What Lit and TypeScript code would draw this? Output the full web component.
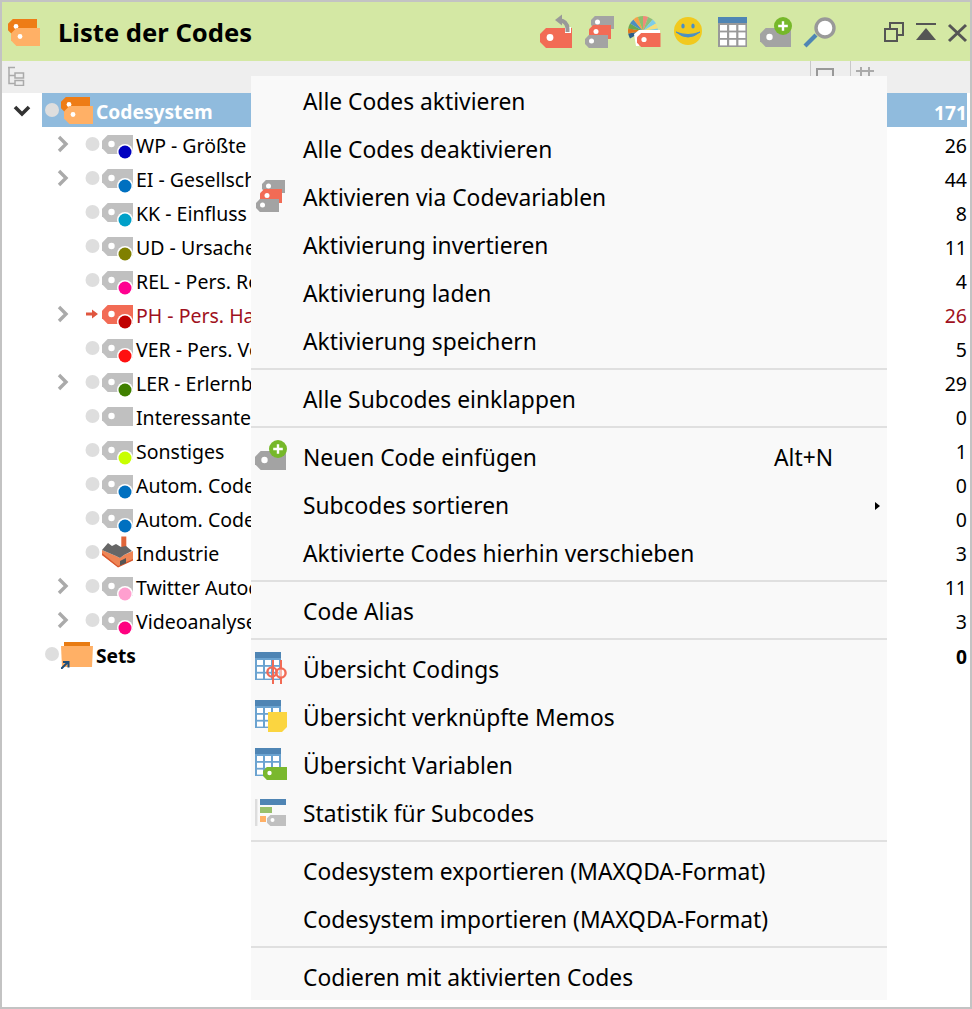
import { LitElement, html, css, svg } from "lit";
import { customElement } from "lit/decorators.js";

const GRAY = "#a3a3a3";
const RED = "#f26b55";
const BLUE = "#4f85b4";
const CELL = "#6ba3d0";

const tagShape = (x: number, y: number, w: number, h: number, fill: string, hole = 3.2) => {
  const c = h * 0.3;
  return svg`<path d="M${x + c} ${y}H${x + w}V${y + h}H${x + c}L${x} ${y + h - c}V${y + c}Z" fill=${fill}/>
    <circle cx=${x + h * 0.5} cy=${y + h * 0.5 - 0.5} r=${hole} fill="#fff"/>`;
};

const wedge = (cx: number, cy: number, r: number, a0: number, a1: number, fill: string) => {
  const p = (a: number) => `${cx + r * Math.cos((a * Math.PI) / 180)} ${cy + r * Math.sin((a * Math.PI) / 180)}`;
  return svg`<path d="M${cx} ${cy}L${p(a0)}A${r} ${r} 0 0 1 ${p(a1)}Z" fill=${fill}/>`;
};

const PIE = ["#2d5f8a", "#e0761c", "#6aa84f", "#4d8ec0", "#f5a24b", "#8fc06a", "#f08a7a", "#8fbf7a", "#7ccdea", "#f2de7b", "#7ccdea"];

const stackIcon = svg`${tagShape(13, 6, 23, 13, GRAY, 2.5)}${tagShape(11, 15, 22, 14, RED, 2.5)}${tagShape(7, 25, 23, 13, GRAY, 2.5)}`;
const plusIcon = svg`${tagShape(6, 18, 31, 19, GRAY, 3.2)}
  <circle cx="29" cy="16" r="9" fill="#76b82a"/>
  <path d="M29 11.2V20.8M24.2 16H33.8" stroke="#fff" stroke-width="2.4"/>`;

const tableBase = svg`<rect x="3" y="0" width="26" height="28" fill=${CELL}/>
  <rect x="3" y="0" width="26" height="6" fill=${BLUE}/>
  ${[0, 1, 2].flatMap((r) => [0, 1, 2].map((c) => svg`<rect x=${5 + c * 8} y=${8 + r * 6.8} width="6" height="5" fill="#fff"/>`))}`;

const tbIcons = [
  svg`${tagShape(6, 18, 32, 20, RED, 3.4)}
    <rect x="31" y="17" width="6" height="6" fill="#fff"/>
    <path d="M33.5 22V19Q33.5 11 25 10" fill="none" stroke="#999" stroke-width="4"/>
    <path d="M21 10L28 4.5V15.5Z" fill="#999"/>`,
  stackIcon,
  svg`${PIE.map((c, i) => wedge(21, 21, 15, 150 + i * 20, 150 + (i + 1) * 20 + 0.5, c))}
    <path d="M12 24L17 20H38V23H20L17 36H14Z" fill="#fff"/>
    ${tagShape(15, 23, 23.5, 14, RED, 2.6)}`,
  svg`<circle cx="22" cy="21" r="14" fill="#f1c91e"/>
    <ellipse cx="17" cy="16" rx="1.7" ry="2.6" fill="#4a8fc5"/>
    <ellipse cx="27" cy="16" rx="1.7" ry="2.6" fill="#4a8fc5"/>
    <path d="M10 22Q22 32 34 22Q22 27 10 22Z" fill="#4a8fc5" stroke="#4a8fc5"/>`,
  svg`<rect x="8" y="7" width="29" height="30" fill="#999"/>
    <rect x="8" y="7" width="29" height="6" fill=${BLUE}/>
    ${[0, 1, 2].flatMap((r) => [0, 1, 2].map((c) => svg`<rect x=${10 + c * 9.2} y=${15 + r * 7.4} width="7" height="5.6" fill="#fff"/>`))}`,
  plusIcon,
  svg`<path d="M7 36L18 25" stroke=${BLUE} stroke-width="4.2"/>
    <circle cx="27" cy="18" r="9" fill="#fff" stroke="#999" stroke-width="3.4"/>`,
];

const menuIcons: Record<string, unknown> = {
  stack: html`<svg class="mi" viewBox="3 6 36 36">${stackIcon}</svg>`,
  plus: html`<svg class="mi" viewBox="3 7 36 36">${plusIcon}</svg>`,
  coding: html`<svg class="mi" viewBox="0 0 36 36">${tableBase}
      <path d="M21 8V32M29 8V32" stroke=${RED} stroke-width="2"/>
      <circle cx="20" cy="20" r="4.6" fill="none" stroke=${RED} stroke-width="2.4"/>
      <circle cx="29" cy="21" r="4.6" fill="#fff" fill-opacity=".5" stroke=${RED} stroke-width="2.4"/></svg>`,
  memo: html`<svg class="mi" viewBox="0 0 36 36">${tableBase}
      <path d="M16 12H35V27L30 32H16Z" fill="#fbd540"/></svg>`,
  vars: html`<svg class="mi" viewBox="0 0 36 36">${tableBase}
      ${tagShape(11, 19, 24, 13, "#7ab82e", 2.2)}</svg>`,
  stats: html`<svg class="mi" viewBox="0 1 36 36">
      <rect x="3" y="4" width="2.4" height="27" fill="#ddd"/>
      <rect x="8" y="4" width="26" height="6" fill=${BLUE}/>
      <rect x="8" y="12" width="12" height="6" fill="#98c06b"/>
      <rect x="8" y="21" width="6" height="6" fill="#ffb066"/>
      ${tagShape(15, 20, 19, 11, "#c0c0c0", 2)}</svg>`,
};

const codeIcon = html`<svg class="code" viewBox="0 0 32 28">
  ${tagShape(0, 0, 29, 16, "#ee7c16", 2.4)}
  ${tagShape(3, 9, 29, 18, "#ffb066", 2.4)}
</svg>`;

type Row = { label: string; n: number; dot?: string; chev?: boolean; kind?: string };
const rows: Row[] = [
  { label: "WP - Größte", n: 26, dot: "#0000c0", chev: true },
  { label: "EI - Gesellschaft", n: 44, dot: "#0070c0", chev: true },
  { label: "KK - Einfluss", n: 8, dot: "#00a0c8" },
  { label: "UD - Ursachen", n: 11, dot: "#808000" },
  { label: "REL - Pers. Rel", n: 4, dot: "#ff0090" },
  { label: "PH - Pers. Halt", n: 26, dot: "#c00000", chev: true, kind: "active" },
  { label: "VER - Pers. Ver", n: 5, dot: "#ff1010" },
  { label: "LER - Erlernbar", n: 29, dot: "#408000", chev: true },
  { label: "Interessante", n: 0 },
  { label: "Sonstiges", n: 1, dot: "#c8ff00" },
  { label: "Autom. Code", n: 0, dot: "#0070c0" },
  { label: "Autom. Code", n: 0, dot: "#0070c0" },
  { label: "Industrie", n: 3, kind: "factory" },
  { label: "Twitter Autocode", n: 11, dot: "#ff9fcf", chev: true },
  { label: "Videoanalyse", n: 3, dot: "#ff0080", chev: true },
];

type Item = { t?: string; icon?: string; key?: string; sub?: boolean };
const menu: Item[] = [
  { t: "Alle Codes aktivieren" },
  { t: "Alle Codes deaktivieren" },
  { t: "Aktivieren via Codevariablen", icon: "stack" },
  { t: "Aktivierung invertieren" },
  { t: "Aktivierung laden" },
  { t: "Aktivierung speichern" },
  {},
  { t: "Alle Subcodes einklappen" },
  {},
  { t: "Neuen Code einfügen", icon: "plus", key: "Alt+N" },
  { t: "Subcodes sortieren", sub: true },
  { t: "Aktivierte Codes hierhin verschieben" },
  {},
  { t: "Code Alias" },
  {},
  { t: "Übersicht Codings", icon: "coding" },
  { t: "Übersicht verknüpfte Memos", icon: "memo" },
  { t: "Übersicht Variablen", icon: "vars" },
  { t: "Statistik für Subcodes", icon: "stats" },
  {},
  { t: "Codesystem exportieren (MAXQDA-Format)" },
  { t: "Codesystem importieren (MAXQDA-Format)" },
  {},
  { t: "Codieren mit aktivierten Codes" },
];

@customElement("app-root")
export class AppRoot extends LitElement {
  static styles = css`
    :host {
      display: block;
      width: 972px;
      height: 1009px;
      position: relative;
      font-family: "Noto Sans", "Open Sans", sans-serif;
      color: #000;
      overflow: hidden;
    }
    .frame {
      box-sizing: border-box;
      height: 1009px;
      border: 2px solid #c3c3c3;
      background: #fff;
      display: flex;
      flex-direction: column;
    }
    .head {
      height: 59px;
      flex: none;
      background: #d4e8a4;
      display: flex;
      align-items: flex-start;
    }
    .logo { width: 32px; height: 28px; margin: 17px 0 0 6px; flex: none; }
    .title {
      font-weight: 700;
      font-size: 25.6px;
      line-height: 61px;
      margin-left: 18px;
      flex: 1;
    }
    .tools { display: flex; margin: 8px 40px 0 0; }
    .tools svg { width: 44px; height: 44px; display: block; }
    .win { display: flex; gap: 8px; margin-top: 18px; }
    .win svg { width: 24px; height: 24px; display: block; }
    .bar {
      height: 32px;
      flex: none;
      background: #eeeeee;
      display: flex;
      padding-left: 3px;
    }
    .bar .tree { width: 20px; height: 20px; margin-top: 5px; }
    .colh {
      border-left: 1px solid #c8c8c8;
      width: 39px;
      flex: none;
    }
    .colh svg { width: 20px; height: 20px; margin: 6px 0 0 4px; display: block; }
    .colh.first { margin-left: auto; }
    .colh.last { width: 119px; }
    .list { flex: 1; }
    .row {
      height: 34px;
      display: flex;
      align-items: stretch;
      padding-right: 3px;
      font-size: 19.5px;
    }
    .sel {
      flex: 1;
      display: flex;
      align-items: center;
      font-weight: 700;
      min-width: 0;
      font-size: 19.2px;
    }
    .sel.on { background: #90bbdd; color: #fff; }
    .root-chev { width: 40px; flex: none; }
    .root-chev svg { width: 40px; height: 34px; display: block; }
    .cdot { width: 14px; height: 14px; border-radius: 50%; background: #dedede; margin: 0 2px 0 3px; flex: none; }
    .code { width: 32px; height: 28px; flex: none; position: relative; top: 1px; }
    .sel .lbl { margin-left: 3px; padding-top: 4px; line-height: 34px; flex: 1; }
    .sel .n { padding-top: 4px; }
    .n { line-height: 34px; padding-top: 2px; text-align: right; flex: none; height: 32px; }
    .chev { width: 18px; flex: none; margin: 0 13px 0 52px; }
    .chev svg { width: 18px; height: 34px; display: block; }
    .dot { width: 15px; flex: none; }
    .dot svg { width: 15px; height: 34px; display: block; }
    .ic { width: 34px; height: 34px; flex: none; display: block; }
    .lbl2 { margin-left: 2px; flex: 1; line-height: 34px; padding-top: 2px; height: 32px; white-space: nowrap; }
    .active { color: #a01020; }
    .menu {
      position: absolute;
      left: 251px;
      top: 76px;
      width: 636px;
      height: 924px;
      background: #f9f9f9;
      overflow: hidden;
      padding-top: 2px;
      box-sizing: border-box;
      font-size: 22.8px;
    }
    .it { height: 48px; display: flex; align-items: center; position: relative; }
    .it .iconcell { width: 52px; height: 48px; flex: none; display: flex; align-items: center; }
    .mi { width: 36px; height: 36px; display: block; margin-left: 1px; }
    .it .txt { flex: 1; white-space: nowrap; padding-bottom: 2px; }
    .key { margin-right: 54px; padding-bottom: 2px; }
    .arrow {
      position: absolute;
      left: 624px;
      top: 20px;
      width: 0;
      height: 0;
      border-left: 5px solid #000;
      border-top: 4px solid transparent;
      border-bottom: 4px solid transparent;
    }
    .sep { height: 10px; box-sizing: border-box; padding-top: 2px; }
    .sep i { display: block; height: 2px; background: #e0e0e0; }
  `;

  private row(r: Row) {
    const active = r.kind === "active";
    return html`<div class="row ${active ? "active" : ""}">
      <div class="chev">
        ${r.chev
          ? html`<svg viewBox="0 0 18 34"><path d="M5 10L12 17L5 24" fill="none" stroke="#aaa" stroke-width="3.4"/></svg>`
          : ""}
      </div>
      <div class="dot">
        <svg viewBox="0 0 15 34">
          ${active
            ? svg`<path d="M1 15.5H7V12.5L13 17L7 21.5V18.5H1Z" fill="#e0563f"/>`
            : svg`<circle cx="7.5" cy="17" r="7" fill="#dedede"/>`}
        </svg>
      </div>
      ${r.kind === "factory"
        ? html`<svg class="ic" viewBox="0 0 34 34">
            <rect x="21.3" y="1.5" width="5" height="13" fill="#e0653a"/>
            <path d="M2 15V20L18 32L33 25V16L24 20L20 23L16 21Z" fill="#ee8555"/>
            <path d="M2 18L18 31L33 24V25.5L18 32.5L2 20Z" fill="#d8562c"/>
            <path d="M2 15L8 8L12 11L16 9L21 12L26 11L32 16L24 20L20 23L16 21Z" fill="#666"/>
            <path d="M20 26L26 23V28L20 30.5Z" fill="#555"/>
          </svg>`
        : html`<svg class="ic" viewBox="0 0 34 34">
            ${tagShape(2, 8, 31, 19, active ? RED : "#c0c0c0", 3.2)}
            ${r.dot
              ? svg`<circle cx="25" cy="25" r="8" fill="#fff"/><circle cx="25" cy="25" r="6.5" fill=${r.dot}/>`
              : ""}
          </svg>`}
      <div class="lbl2">${r.label}</div>
      <div class="n">${r.n}</div>
    </div>`;
  }

  render() {
    return html`<div class="frame">
        <div class="head">
          <svg class="logo" viewBox="0 0 32 28">
            ${tagShape(0, 0, 29, 16, "#ee7c16", 2.4)}${tagShape(3, 9, 29, 18, "#ffb066", 2.4)}
          </svg>
          <div class="title">Liste der Codes</div>
          <div class="tools">
            ${tbIcons.map((g) => html`<svg viewBox="0 0 44 44">${g}</svg>`)}
          </div>
          <div class="win">
            <svg viewBox="0 0 24 24">
              <path d="M8 10V3H21V15H15" fill="none" stroke="#555" stroke-width="2"/>
              <rect x="3" y="9" width="12" height="12" fill="none" stroke="#555" stroke-width="2"/>
            </svg>
            <svg viewBox="0 0 24 24">
              <rect x="2" y="3" width="20" height="2" fill="#555"/>
              <path d="M12 8L22 20H2Z" fill="#555"/>
            </svg>
            <svg viewBox="0 0 24 24">
              <path d="M3 5L20 21M20 5L3 21" stroke="#555" stroke-width="3"/>
            </svg>
          </div>
        </div>
        <div class="bar">
          <svg class="tree" viewBox="0 0 20 20">
            <path d="M3 1.5H10M4 1.5V17.5H10M4 9.5H10" fill="none" stroke="#aaa" stroke-width="1.5"/>
            <rect x="10" y="7" width="8.5" height="5" fill="none" stroke="#aaa" stroke-width="1.5"/>
            <rect x="10" y="14.5" width="8.5" height="5" fill="none" stroke="#aaa" stroke-width="1.5"/>
          </svg>
          <div class="colh first">
            <svg viewBox="0 0 20 20"><rect x="2" y="2" width="16" height="16" fill="none" stroke="#999" stroke-width="2"/></svg>
          </div>
          <div class="colh last">
            <svg viewBox="0 0 20 20"><path d="M6 0V20M14 0V20M1 4H19M1 12H19" stroke="#aaa" stroke-width="2" fill="none"/></svg>
          </div>
        </div>
        <div class="list">
          <div class="row">
            <div class="root-chev">
              <svg viewBox="0 0 40 34"><path d="M13 14L20 21L27 14" fill="none" stroke="#333" stroke-width="3.6"/></svg>
            </div>
            <div class="sel on">
              <div class="cdot"></div>
              ${codeIcon}
              <div class="lbl">Codesystem</div>
              <div class="n">171</div>
            </div>
          </div>
          ${rows.map((r) => this.row(r))}
          <div class="row">
            <div class="root-chev"></div>
            <div class="sel">
              <div class="cdot"></div>
              <svg class="code" viewBox="0 -1 32 28">
                <rect x="3" y="0" width="26" height="6" fill="#e87b12"/>
                <path d="M0 4H32L31 25H1Z" fill="#ffb066"/>
                <path d="M0 27L7 20M2 20H7.5V25.5" fill="none" stroke="#1f4e79" stroke-width="2"/>
              </svg>
              <div class="lbl">Sets</div>
              <div class="n">0</div>
            </div>
          </div>
        </div>
      </div>
      <div class="menu">
        ${menu.map((m) =>
          m.t
            ? html`<div class="it">
                <div class="iconcell">${m.icon ? menuIcons[m.icon] : ""}</div>
                <div class="txt">${m.t}</div>
                ${m.key ? html`<div class="key">${m.key}</div>` : ""}
                ${m.sub ? html`<div class="arrow"></div>` : ""}
              </div>`
            : html`<div class="sep"><i></i></div>`
        )}
      </div>`;
  }
}
